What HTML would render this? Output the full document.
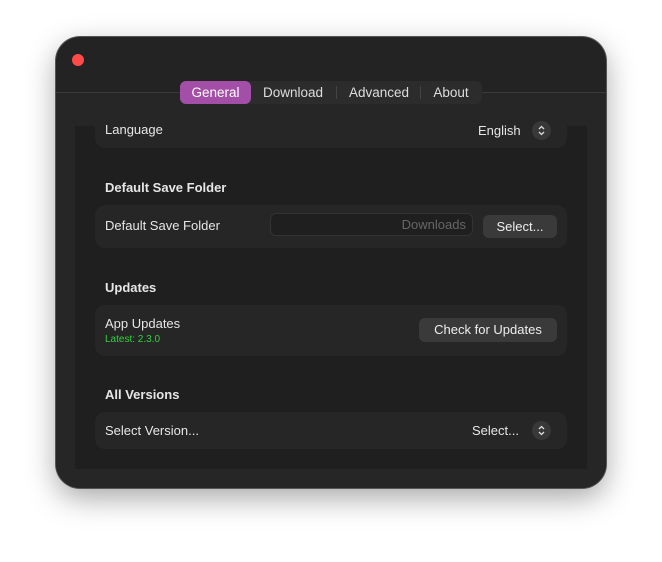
<!DOCTYPE html>
<html><head><style>
body{margin:0;width:662px;height:562px;background:#fff;font-family:"Liberation Sans",sans-serif;position:relative;overflow:hidden}
.win{position:absolute;left:56px;top:37px;width:550px;height:451px;border-radius:24px;background:#232323;box-shadow:0 0 0 1px #555,0 10px 30px rgba(0,0,0,.35);overflow:hidden}
.red{position:absolute;left:16px;top:17px;width:12px;height:12px;border-radius:50%;background:#fe4b48}
.content{position:absolute;left:0;top:55px;width:550px;height:400px;background:#262626;border-top:1px solid #3a3a3a}
.scroll{position:absolute;left:19px;top:33px;width:512px;height:343px;background:#1f1f1f}
.tabs{position:absolute;left:124px;top:44px;width:302px;height:23px;background:#2c2c2c;border-radius:6px;font-size:13.5px;color:#ddd}
.tab{position:absolute;top:0;height:23px;line-height:23px;text-align:center}
.sel{background:#a34fa8;color:#fff;border-radius:6px}
.sep{position:absolute;top:5px;width:1px;height:13px;background:#444}
.card{position:absolute;left:39px;width:472px;background:#262626;border-radius:10px;color:#e6e6e6;font-size:13px}
.h{position:absolute;left:49px;color:#e6e6e6;font-size:13px;font-weight:bold}
.btn{position:absolute;background:#3a3a3a;border-radius:6px;color:#eee;font-size:13px;text-align:center}
.chev{position:absolute;width:19px;height:19px;border-radius:50%;background:#383838}
</style></head><body>
<div class="win">
<div class="red"></div>
<div class="content">
<div class="scroll"></div>
</div>
<div class="card" style="top:73px;height:38px;border-radius:0 0 10px 10px">
<span style="position:absolute;left:10px;top:12px">Language</span>
<span style="position:absolute;left:383px;top:13px">English</span>
<div class="chev" style="left:437px;top:11px"><svg width="19" height="19"><path d="M7 8l2.5-2.5L12 8M7 11l2.5 2.5L12 11" stroke="#ddd" stroke-width="1.3" fill="none"/></svg></div>
</div>
<div class="tabs">
<div class="tab sel" style="left:0;width:71px">General</div>
<div class="tab" style="left:76px;width:74px">Download</div>
<div class="sep" style="left:156px"></div>
<div class="tab" style="left:162px;width:74px">Advanced</div>
<div class="sep" style="left:240px"></div>
<div class="tab" style="left:244px;width:54px">About</div>
</div>
<div class="h" style="top:143px">Default Save Folder</div>
<div class="card" style="top:168px;height:43px">
<span style="position:absolute;left:10px;top:13px">Default Save Folder</span>
<div style="position:absolute;left:175px;top:8px;width:203px;height:23px;border:1px solid #333;border-radius:6px;background:#1f1f1f;color:#666;text-align:right;box-sizing:border-box;padding-right:6px;line-height:22px">Downloads</div>
<div class="btn" style="left:388px;top:10px;width:74px;height:23px;line-height:23px">Select...</div>
</div>
<div class="h" style="top:243px">Updates</div>
<div class="card" style="top:268px;height:51px">
<span style="position:absolute;left:10px;top:11px">App Updates</span>
<span style="position:absolute;left:10px;top:29px;font-size:10px;color:#2fd33a">Latest: 2.3.0</span>
<div class="btn" style="left:324px;top:13px;width:138px;height:24px;line-height:24px">Check for Updates</div>
</div>
<div class="h" style="top:350px">All Versions</div>
<div class="card" style="top:375px;height:37px">
<span style="position:absolute;left:10px;top:11px">Select Version...</span>
<span style="position:absolute;left:377px;top:11px">Select...</span>
<div class="chev" style="left:437px;top:9px"><svg width="19" height="19"><path d="M7 8l2.5-2.5L12 8M7 11l2.5 2.5L12 11" stroke="#ddd" stroke-width="1.3" fill="none"/></svg></div>
</div>
</div>
</body></html>
